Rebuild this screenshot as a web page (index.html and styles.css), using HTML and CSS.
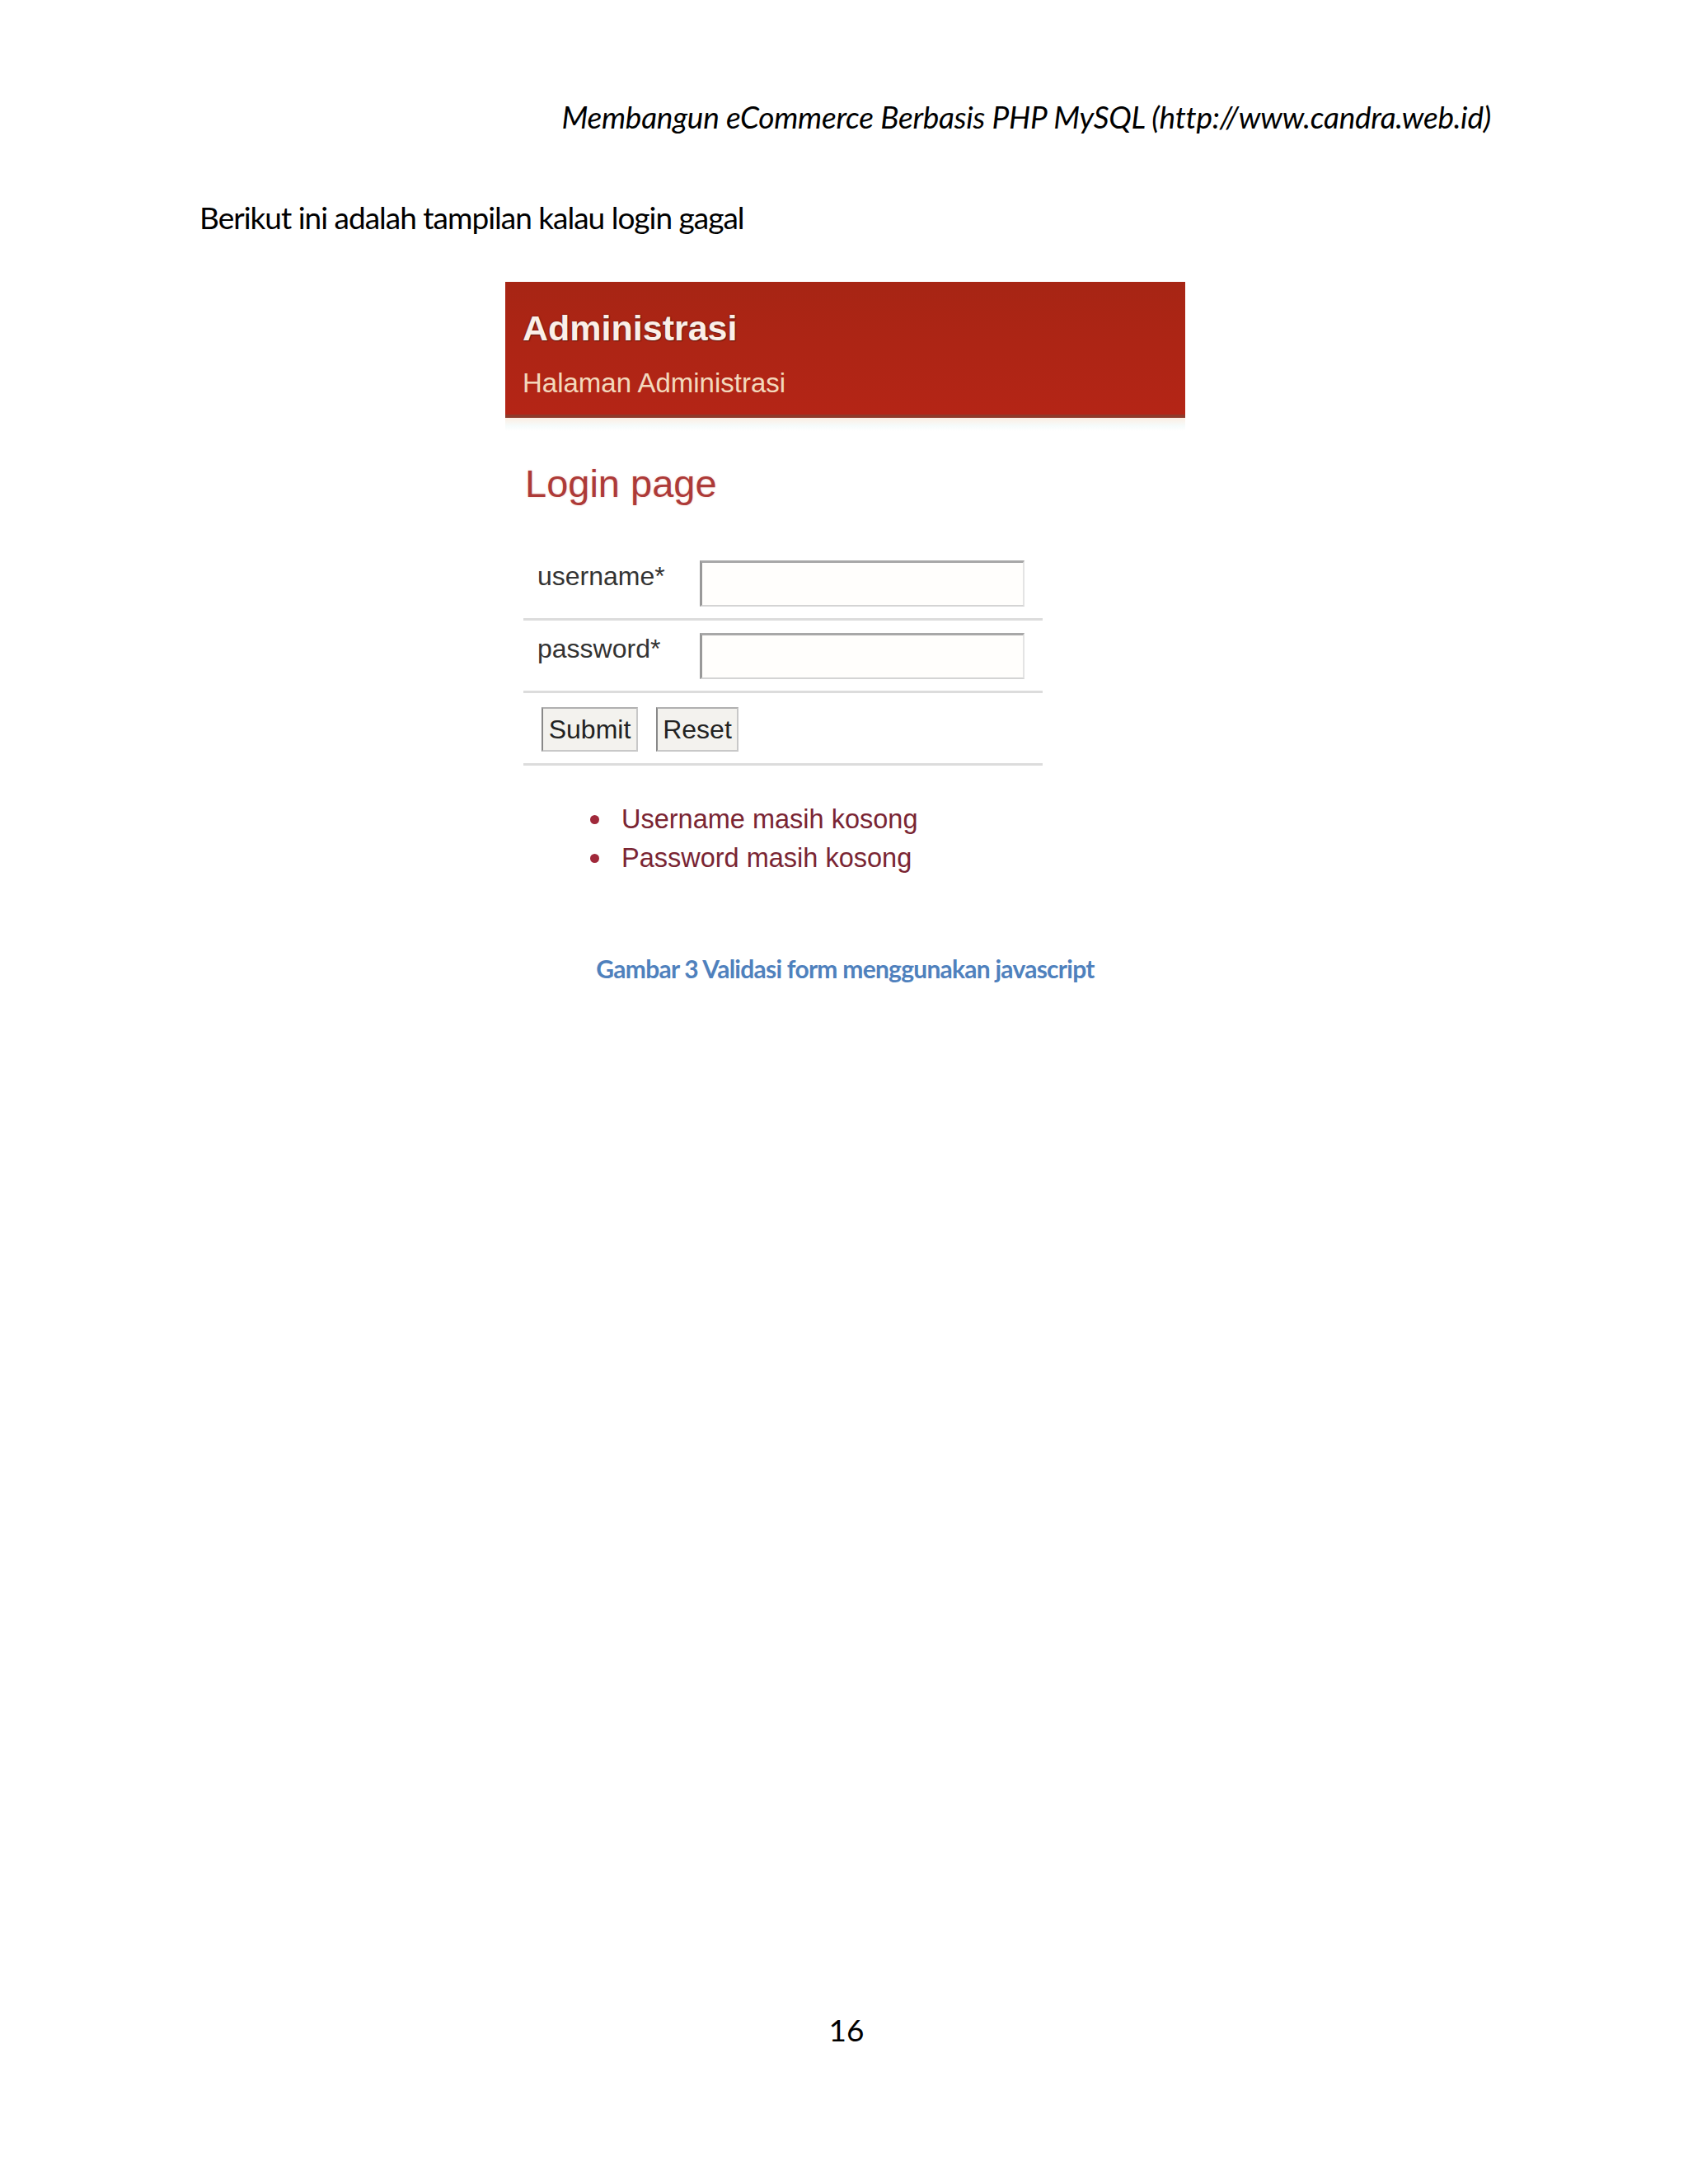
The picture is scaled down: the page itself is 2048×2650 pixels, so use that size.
FILE: index.html
```html
<!DOCTYPE html>
<html lang="id">
<head>
<meta charset="utf-8">
<title>Membangun eCommerce Berbasis PHP MySQL</title>
<link rel="stylesheet" href="styles.css">
</head>
<body>
<div class="page">
  <p class="running-head">Membangun eCommerce Berbasis PHP MySQL (http://www.candra.web.id)</p>
  <p class="body-text">Berikut ini adalah tampilan kalau login gagal</p>
  <div class="figure">
    <div class="shot">
      <div class="banner">
        <div class="banner-title">Administrasi</div>
        <div class="banner-sub">Halaman Administrasi</div>
      </div>
      <div class="banner-glow"></div>
      <div class="login-title">Login page</div>
      <div class="form">
        <div class="row">
          <span class="label">username*</span>
          <span class="input"></span>
        </div>
        <div class="row">
          <span class="label">password*</span>
          <span class="input"></span>
        </div>
        <div class="row row-buttons">
          <span class="btn btn-submit">Submit</span>
          <span class="btn btn-reset">Reset</span>
        </div>
      </div>
      <ul class="errors">
        <li>Username masih kosong</li>
        <li>Password masih kosong</li>
      </ul>
    </div>
    <p class="caption">Gambar 3 Validasi form menggunakan javascript</p>
  </div>
  <p class="page-number">16</p>
</div>
</body>
</html>
```
FILE: styles.css
```css
html, body {
  margin: 0;
  padding: 0;
  background: #ffffff;
}

.page {
  width: 2048px;
  min-height: 2650px;
  box-sizing: border-box;
  padding: 119px 239px 164px 242px;
  display: flex;
  flex-direction: column;
  font-family: Lato, "Open Sans", sans-serif;
  color: #000;
}

.page p {
  margin: 0;
}

.running-head {
  font-style: italic;
  font-size: 37px;
  line-height: 46px;
  letter-spacing: -0.25px;
  text-align: right;
}

.body-text {
  margin-top: 76px !important;
  font-size: 37px;
  line-height: 46px;
  letter-spacing: -1px;
}

.figure {
  margin-top: 55px;
  display: flex;
  flex-direction: column;
  align-items: center;
}

.shot {
  width: 825px;
  font-family: "Liberation Sans", Arial, sans-serif;
  background: #fff;
}

.banner {
  height: 165px;
  box-sizing: border-box;
  padding: 31px 0 0 21px;
  background: linear-gradient(#a72514, #b42516);
  border-bottom: 4px solid #8e3a2a;
}

.banner-title {
  font-weight: bold;
  font-size: 43px;
  line-height: 50px;
  color: #fbefe8;
  text-shadow: 0 0 2px #5a1a10, 1px 1px 1px #6a1a10;
}

.banner-sub {
  margin-top: 22px;
  font-size: 33px;
  line-height: 40px;
  color: #f3d8bc;
}

.banner-glow {
  height: 16px;
  background: linear-gradient(#fbeee2, #f6fbfb 60%, #fff);
}

.login-title {
  margin: 36px 0 0 24px;
  font-size: 47px;
  line-height: 56px;
  color: #ad3a38;
  text-shadow: 0 0 3px #f3d8d0;
}

.form {
  margin: 50px 0 0 22px;
  width: 630px;
}

.row {
  height: 88px;
  box-sizing: border-box;
  display: flex;
  align-items: flex-start;
  border-bottom: 3px solid #dcdcdc;
}

.label {
  width: 197px;
  padding: 11px 0 0 17px;
  font-size: 32px;
  line-height: 46px;
  color: #333;
}

.input {
  margin-top: 15px;
  width: 394px;
  height: 56px;
  box-sizing: border-box;
  border-top: 3px solid #a8a8a8;
  border-left: 3px solid #999;
  border-right: 2px solid #e4e4e4;
  border-bottom: 2px solid #d4d4d4;
  background: #fffefc;
}

.row-buttons {
  padding: 17px 0 0 22px;
  gap: 22px;
}

.btn {
  height: 54px;
  box-sizing: border-box;
  display: flex;
  align-items: center;
  justify-content: center;
  font-size: 32px;
  color: #222;
  background: #f3f2ee;
  border-top: 2px solid #b0b0b0;
  border-left: 2px solid #888;
  border-right: 2px solid #c8c8c8;
  border-bottom: 2px solid #c8c8c8;
}

.btn-submit {
  width: 117px;
}

.btn-reset {
  width: 100px;
}

.errors {
  margin: 42px 0 0 0;
  padding: 0 0 0 141px;
  list-style: none;
}

.errors li {
  position: relative;
  font-size: 32.5px;
  line-height: 47px;
  color: #7a2533;
}

.errors li::before {
  content: "";
  position: absolute;
  left: -38px;
  top: 18px;
  width: 11px;
  height: 11px;
  border-radius: 50%;
  background: #a0283a;
}

.caption {
  margin-top: 90px !important;
  font-weight: bold;
  font-size: 30px;
  line-height: 40px;
  letter-spacing: -0.75px;
  color: #4f81bd;
  text-align: center;
}

.page-number {
  margin-top: auto !important;
  font-size: 37px;
  line-height: 46px;
  text-align: center;
  padding-left: 3px;
}
```
